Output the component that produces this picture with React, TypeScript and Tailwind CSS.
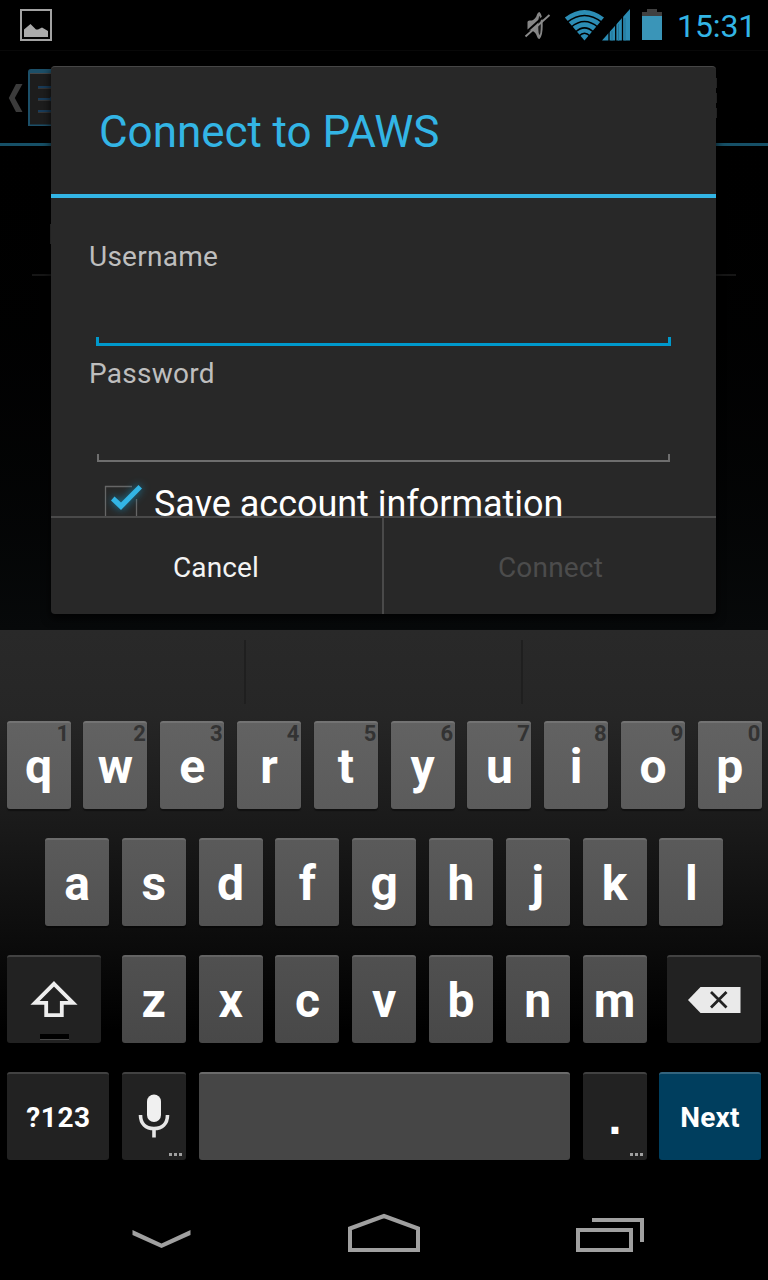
import React from "react";

const KEY_BASE =
  "relative flex h-[88px] shrink-0 items-center justify-center rounded-[3px] text-white font-bold";

function Key({ label, hint, className }: { label: string; hint?: string; className: string }) {
  return (
    <div className={`${KEY_BASE} w-16 border-t-2 border-t-white/15 text-[48px] leading-none shadow-[0_2px_1px_rgba(0,0,0,0.4)] ${className}`}>
      <span className="relative top-[1px]">{label}</span>
      {hint && (
        <span className="absolute right-[1.5px] -top-[1px] text-[22px] leading-[24px] text-[#333333]">{hint}</span>
      )}
    </div>
  );
}

function DarkKey({ className, children }: { className: string; children: React.ReactNode }) {
  return <div className={`${KEY_BASE} border-t-2 border-t-white/15 bg-[#222222] ${className}`}>{children}</div>;
}

function MoreDots() {
  return (
    <span className="absolute right-1 bottom-1 flex gap-[2px]">
      <i className="h-[3px] w-[3px] bg-[#a0a0a0]" />
      <i className="h-[3px] w-[3px] bg-[#a0a0a0]" />
      <i className="h-[3px] w-[3px] bg-[#a0a0a0]" />
    </span>
  );
}

function StatusBar() {
  return (
    <header className="flex h-[50px] shrink-0 items-start bg-black">
      <svg className="mt-[8px] ml-[19px]" width="34" height="34" viewBox="0 0 34 34">
        <rect x="2" y="2" width="30" height="30" fill="#000" stroke="#a3a3a3" strokeWidth="2" />
        <path d="M5 29V21.500L11.500 16L17 21.500H19L23 19.500L29 23V29Z" fill="#aaaaaa" />
      </svg>
      <svg className="ml-[471px]" width="142" height="50" viewBox="524 0 142 50">
        <path d="M527.500 22q0-1.500 2-1.500h2.500q4-2 5-6 .8-2.500 2.500-2.500 3.200 3 3.200 13.500t-3.200 13.500q-1.700 0-2.500-2.500-1-4-5-6h-2.500q-2 0-2-1.500Z" fill="#868686" />
        <ellipse cx="539.500" cy="25.500" rx="1.300" ry="9.500" fill="#151515" />
        <path d="M523.500 34.500L547.500 13" stroke="#000" strokeWidth="2" />
        <path d="M525.500 36.500L549.500 15" stroke="#8b8b8b" strokeWidth="1.900" />
        <path d="M564.800 17.500Q584.500 2.500 604 17.500L584.500 40.500Z" fill="#2c8db5" />
        <g fill="none" stroke="#000" strokeWidth="1.500">
          <path d="M567 22.300Q584.500 8.500 602 22.300" />
          <path d="M571 27.300Q584.500 15.800 598 27.300" />
          <path d="M575.500 32Q584.500 23.800 593.500 32" />
          <path d="M579 36Q584.500 30.300 590 36" />
        </g>
        <path d="M602 40.500L630 9V40.500Z" fill="#2c8db5" />
        <path d="M609 30V41M615.700 22V41M622.500 16V41" stroke="#000" strokeWidth="1.300" />
        <path d="M612 31V41M618.500 24V41M625 18V41" stroke="#1f6a88" strokeWidth=".7" />
        <path d="M642 16V12H647V9H657V12H662V16Z" fill="#404040" />
        <rect x="642" y="16" width="20" height="24" fill="#3a95b8" />
      </svg>
      <span className="ml-[11px] mt-[6px] text-[32px] leading-[40px] tracking-[-0.1px] text-[#33b5e5]">15:31</span>
    </header>
  );
}

function AppBackdrop() {
  return (
    <div className="flex h-full flex-col bg-linear-to-b from-black to-[#07090a]">
      <div className="flex h-[96px] items-start border-t border-t-[#080808] border-b-[3px] border-b-[#165067]">
        <svg className="mt-[17px] ml-[8px]" width="80" height="62" viewBox="8 68 80 62">
          <path d="M16 84H22.500L14.800 98L22.500 112H16L8.800 98Z" fill="#3b3b3b" />
          <path d="M28 126V72Q28 69 31 69H88V126Z" fill="#1c4f68" />
          <path d="M30 124.500V73H88V124.500Z" fill="#1d1d1d" />
          <path d="M30 73.500H88" stroke="#454545" />
          <path d="M38 87H60M38 99H60M38 111H60" stroke="#183b59" strokeWidth="2" />
          <path d="M38 88.500H60M38 100.500H60M38 112.500H60" stroke="#353535" />
          <path d="M52 95L49 99L52 103Z" fill="#183b59" />
        </svg>
        <div className="mt-[27px] ml-auto mr-[51px] flex flex-col gap-[5px]">
          <i className="h-[10px] w-3 bg-[#383838]" />
          <i className="h-[10px] w-3 bg-[#383838]" />
          <i className="h-[10px] w-3 bg-[#383838]" />
        </div>
      </div>
      <div className="mx-8 flex h-[130px] items-end border-b-2 border-b-[#161616] pb-[30px]">
        <i className="ml-[18px] h-5 w-3 bg-[#383838]" />
      </div>
    </div>
  );
}

function Field({ label, active }: { label: string; active?: boolean }) {
  return (
    <label className="flex h-[117px] flex-col text-[28px] text-[#bebebe]">
      <span className="ml-[38px] pt-px leading-[34px] tracking-[0.25px]">{label}</span>
      {active ? (
        <span className="mt-[63px] ml-[45px] h-[9px] w-[575px] border-x-[3px] border-b-[3px] border-[#0099cc]" />
      ) : (
        <span className="mt-[63px] ml-[46px] h-[8px] w-[573px] border-x-2 border-b-2 border-[#6e6e6e]" />
      )}
    </label>
  );
}

function Dialog() {
  return (
    <section className="absolute top-[16px] left-[51px] flex h-[548px] w-[665px] flex-col overflow-hidden rounded-[4px] border-t border-t-[#464646] bg-[#282828] shadow-[0_4px_8px_1px_rgba(0,0,0,0.7)]">
      <h1 className="flex h-[131px] shrink-0 items-center border-b-4 border-b-[#33b5e5] pt-[2px] pl-[48px] text-[44px] text-[#33b5e5]">
        <span className="tracking-[-0.05px]">Connect to PAWS</span>
      </h1>
      <div className="h-[318px] shrink-0 overflow-hidden pt-[41px]">
        <Field label="Username" active />
        <Field label="Password" />
        <div className="flex items-start">
          <svg className="ml-[47px] mt-[2px] shrink-0 overflow-visible" width="52" height="48" viewBox="98 475 52 48">
            <path d="M132 486.500H105.500V518H136.500V499" fill="none" stroke="#666" strokeWidth="1.300" />
            <path
              className="[filter:drop-shadow(0_0_4px_#1683aa)]"
              d="M111 500.500L114.500 496.500L121 502.500L138.500 485L142 488.500L121 510Z"
              fill="#33b5e5"
            />
          </svg>
          <span className="ml-[4px] mt-[10px] text-[36px] leading-[42px] tracking-[-0.03px] whitespace-nowrap text-white">
            Save account information
          </span>
        </div>
      </div>
      <div className="flex flex-1 border-t-2 border-t-[#4a4a4a] text-[28px]">
        <button className="w-[333px] border-r-2 border-r-[#4a4a4a] pt-[4px] pr-px text-[#f3f3f3]">
          <span className="tracking-[0.15px]">Cancel</span>
        </button>
        <button className="flex-1 pt-[4px] pl-px text-[#4c4c4c]">
          <span className="tracking-[0.2px]">Connect</span>
        </button>
      </div>
    </section>
  );
}

const TOP_ROW = ["q", "w", "e", "r", "t", "y", "u", "i", "o", "p"];
const HOME_ROW = ["a", "s", "d", "f", "g", "h", "j", "k", "l"];
const BOTTOM_ROW = ["z", "x", "c", "v", "b", "n", "m"];

function Keyboard() {
  return (
    <div className="flex h-[554px] shrink-0 flex-col bg-[linear-gradient(to_bottom,#292929_0px,#262626_85px,#181818_210px,#0d0d0d_300px,#000_400px)]">
      <div className="flex h-[91px] shrink-0 items-start pt-[10px]">
        <i className="h-16 w-[246px] border-r-2 border-r-[#1f1f1f]" />
        <i className="h-16 w-[277px] border-r-2 border-r-[#1f1f1f]" />
      </div>
      <div className="flex flex-col gap-[29px]">
        <div className="flex gap-[12.8px] pl-[6.6px]">
          {TOP_ROW.map((k, i) => (
            <Key key={k} label={k} hint={String((i + 1) % 10)} className="bg-linear-to-b from-[#626262] to-[#5b5b5b]" />
          ))}
        </div>
        <div className="flex gap-[12.8px] pl-[45px]">
          {HOME_ROW.map((k) => (
            <Key key={k} label={k} className="bg-linear-to-b from-[#5a5a5a] to-[#525252]" />
          ))}
        </div>
        <div className="flex gap-[12.8px] pl-[7px]">
          <DarkKey className="mr-[8px] w-[94px]">
            <svg className="absolute inset-0" width="94" height="86" viewBox="7 957 94 86">
              <path d="M54 983.800L73 1002.800H61.800V1015.200H46.200V1002.800H35Z" fill="none" stroke="#eee" strokeWidth="3.800" />
              <path d="M40 1034H69V1039H40Z" fill="#000" />
              <path d="M40 1039.500H69" stroke="#484848" />
            </svg>
          </DarkKey>
          {BOTTOM_ROW.map((k) => (
            <Key key={k} label={k} className="bg-linear-to-b from-[#505050] to-[#484848]" />
          ))}
          <DarkKey className="ml-[7.800px] w-[94px]">
            <svg className="absolute inset-0" width="94" height="86" viewBox="667 957 94 86">
              <path d="M688 1000L700.500 987H740.500V1013H700.500Z" fill="#eaeaea" />
              <path d="M711 992L726.500 1007.500M726.500 992L711 1007.500" stroke="#222" strokeWidth="2.800" />
            </svg>
          </DarkKey>
        </div>
        <div className="flex gap-[13px] pl-[7px]">
          <DarkKey className="w-[102px] text-[28px]">
            <span className="relative top-px left-[0.5px] tracking-[0.6px]">?123</span>
          </DarkKey>
          <DarkKey className="w-16">
            <svg className="absolute inset-0" width="64" height="86" viewBox="122 1074 64 86">
              <rect x="147" y="1094.500" width="14" height="27.500" rx="7" fill="#f0f0f0" />
              <path d="M140.500 1115C140.500 1124 146 1128.500 154 1128.500S167.500 1124 167.500 1115M154 1128V1137.500" fill="none" stroke="#e6e6e6" strokeWidth="3.600" />
            </svg>
            <MoreDots />
          </DarkKey>
          <div className={`${KEY_BASE} w-[371px] border-t-2 border-t-white/20 bg-[#464646]`} />
          <DarkKey className="w-16">
            <span className="relative top-[1px] font-['Liberation_Sans'] text-[48px] leading-none">.</span>
            <MoreDots />
          </DarkKey>
          <div className={`${KEY_BASE} -ml-px w-[102px] border-t-2 border-t-white/20 bg-[#003e5e] text-[28px]`}>
            <span className="relative top-px tracking-[0.2px]">Next</span>
          </div>
        </div>
      </div>
    </div>
  );
}

function NavBar() {
  return (
    <nav className="flex h-24 shrink-0 items-start bg-black">
      <svg className="h-24 w-[768px]" viewBox="0 1184 768 96" fill="none" stroke="#a0a0a0" strokeWidth="4">
        <path d="M132.500 1230L161.500 1243.500 190.500 1230V1235L161.500 1248 132.500 1235Z" fill="#a0a0a0" stroke="none" />
        <path d="M350 1228.500L384 1216L418 1228.500V1250H350Z" />
        <path d="M578 1230H631V1250H578ZM592 1220H642V1242" />
      </svg>
    </nav>
  );
}

export default function App() {
  return (
    <main className="flex h-[1280px] w-[768px] flex-col overflow-hidden bg-black font-[Roboto,sans-serif]">
      <StatusBar />
      <div className="relative h-[580px] shrink-0 overflow-hidden">
        <AppBackdrop />
        <Dialog />
      </div>
      <Keyboard />
      <NavBar />
    </main>
  );
}
